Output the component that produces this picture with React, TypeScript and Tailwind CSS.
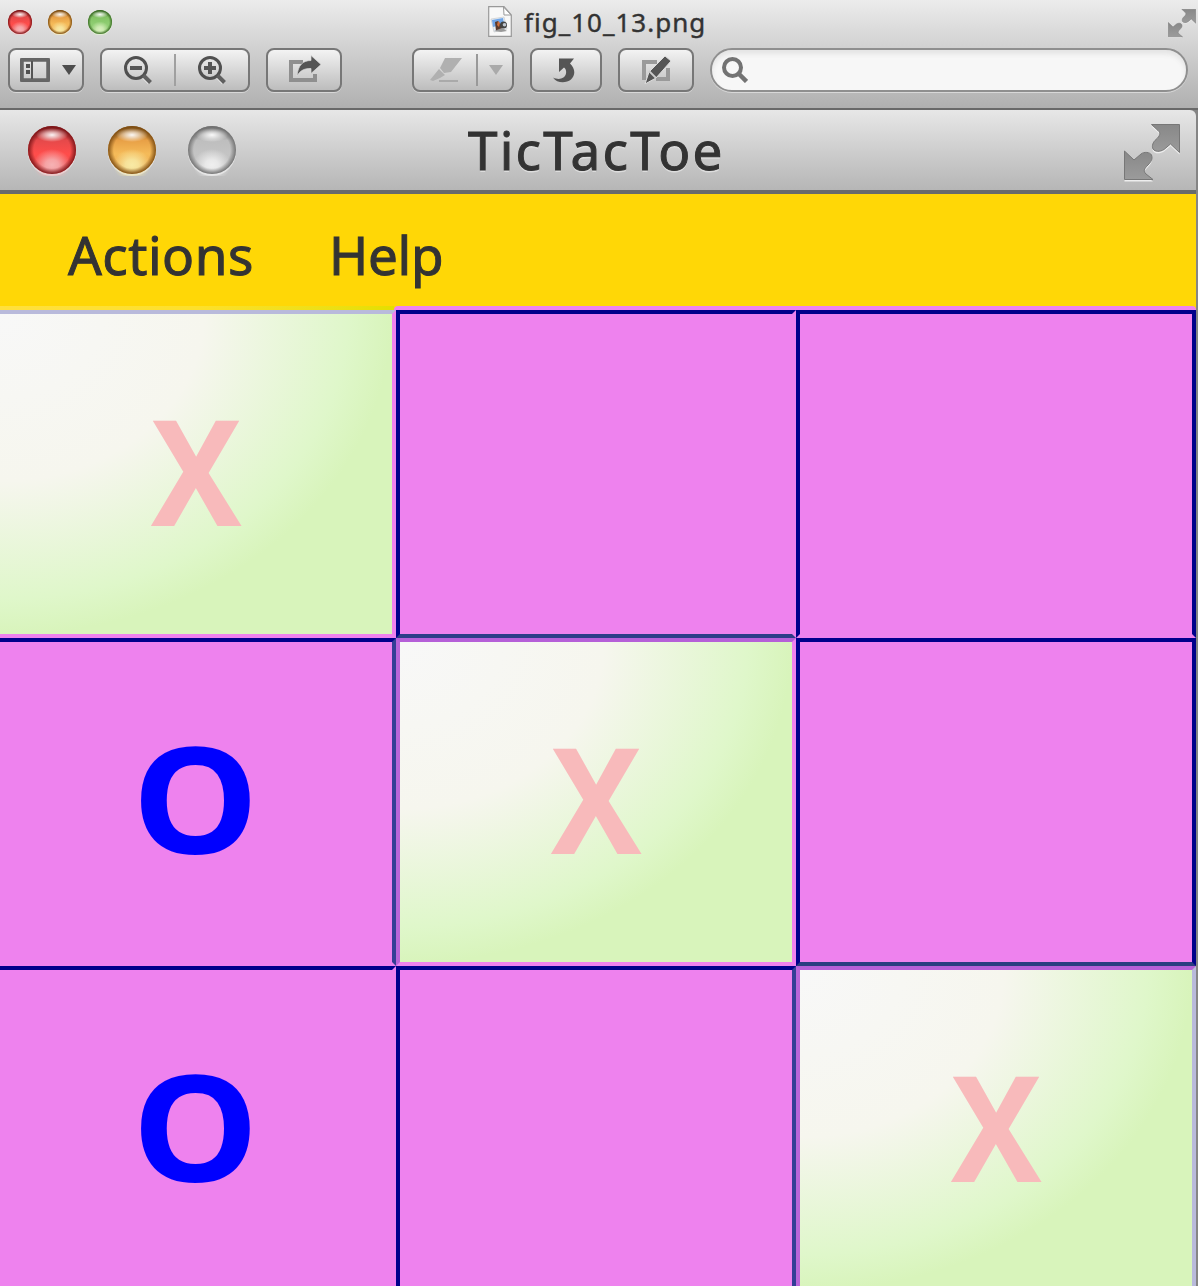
import type { ReactNode } from "react";

const BUTTON =
  "flex h-[44px] shrink-0 items-center rounded-[8px] border-2 border-[#777] bg-gradient-to-b from-[#f3f3f3] to-[#bdbdbd] shadow-[0_1px_0_#d8d8d8]";

function Light({ size, tone }: { size: "sm" | "lg"; tone: "red" | "amber" | "green" | "gray" }) {
  const tones = {
    red: ["#7d1518", "#e5494a", "#ff4d4b", "#f6b2b4"],
    amber: ["#7d4d12", "#e8a046", "#f5bb59", "#f8eaa5"],
    green: ["#3a6b25", "#83c364", "#8fce72", "#d8f0bd"],
    gray: ["#707070", "#bebebe", "#c4c4c4", "#efefef"],
  };
  const [edge, top, mid, glow] = tones[tone];
  return (
    <svg viewBox="0 0 48 50" className={size === "sm" ? "h-[25px] w-6" : "h-[50px] w-12"}>
      <defs>
        <linearGradient id={`b-${tone}-${size}`} x1="0" y1="0" x2="0" y2="1">
          <stop offset="0" stopColor={edge} />
          <stop offset=".3" stopColor={top} />
          <stop offset=".58" stopColor={mid} />
          <stop offset="1" stopColor={top} />
        </linearGradient>
        <radialGradient id={`r-${tone}-${size}`}>
          <stop offset=".76" stopColor={edge} stopOpacity="0" />
          <stop offset="1" stopColor={edge} stopOpacity=".95" />
        </radialGradient>
        <radialGradient id={`g-${tone}-${size}`}>
          <stop offset="0" stopColor={glow} />
          <stop offset=".35" stopColor={glow} stopOpacity=".85" />
          <stop offset="1" stopColor={glow} stopOpacity="0" />
        </radialGradient>
        <radialGradient id={`h-${tone}-${size}`}>
          <stop offset="0" stopColor="#fff" stopOpacity=".95" />
          <stop offset=".4" stopColor="#fff" stopOpacity=".6" />
          <stop offset="1" stopColor="#fff" stopOpacity="0" />
        </radialGradient>
      </defs>
      <circle cx="24" cy="26" r="24" fill="#fff" opacity=".5" />
      <circle cx="24" cy="24" r="24" fill={`url(#b-${tone}-${size})`} />
      <ellipse cx="24" cy="39" rx="19" ry="16" fill={`url(#g-${tone}-${size})`} />
      <circle cx="24" cy="24" r="24" fill={`url(#r-${tone}-${size})`} />
      <ellipse cx="24" cy="9" rx="16" ry="7" fill={`url(#h-${tone}-${size})`} />
    </svg>
  );
}

function Magnifier({ sign }: { sign: "minus" | "plus" }) {
  return (
    <svg viewBox="0 0 28 28" className="h-7 w-7" fill="none">
      <path d="M19.5 21.5l5.5 5.5" stroke="#eee" strokeWidth="3" />
      <circle cx="12" cy="12" r="10.5" stroke="#505050" strokeWidth="3" />
      <path d="M19.5 19.5l7 7" stroke="#606060" strokeWidth="4" />
      <path d="M6 12h12" stroke="#555" strokeWidth="4" />
      {sign === "plus" && <path d="M12 6v12" stroke="#555" strokeWidth="4" />}
    </svg>
  );
}

function Expand({ className }: { className: string }) {
  return (
    <svg viewBox="0 0 56 58" className={className}>
      <defs>
        <linearGradient id="arrow" x1="0" y1="0" x2="0" y2="1">
          <stop offset="0" stopColor="#888" />
          <stop offset="1" stopColor="#9b9b9b" />
        </linearGradient>
      </defs>
      {["translate(0 2)", ""].map((t, i) => (
        <g key={i} transform={t} fill={i ? "url(#arrow)" : "#eee"} stroke={i ? "#777" : "none"} strokeWidth="1">
          <path d="M27.500 .5H55.500V28.500L46.500 20L40 25.500C36 28 31 28 29 25C27.500 22 29 18 32 15.500C36 12 37 9 34 6.500z" />
          <path d="M.5 27L10 36L17 30C20 27.500 26 28 27.500 31C29 35 27 38 24 41C20 45 19 47 22 50L29 55.500H.5z" />
        </g>
      ))}
    </svg>
  );
}

function FileIcon() {
  return (
    <svg viewBox="0 0 24 31" className="h-[31px] w-6">
      <path d="M.7 .7H16L23.300 9v21.300H.7z" fill="#f8f8f8" stroke="#999" strokeWidth="1.200" />
      <path d="M15.500 1l.5 8h7z" fill="#fff" stroke="#999" />
      <path d="M3 13l13-2 3 12-13 3z" fill="#e5eef7" stroke="#bbb" strokeWidth=".5" />
      <path d="M4 14l11-2 1 6-11 3z" fill="#6fa5e8" />
      <path d="M7 16l3-1 2 3 3 1-1 5-6 1z" fill="#59392c" />
      <path d="M10 15l2 2-1 4-2-2z" fill="#cf6f3c" />
      <circle cx="15.500" cy="19" r="3.500" fill="#444" />
      <circle cx="16.500" cy="18.700" r="1.800" fill="#c0c8d2" />
      <path d="M6 25l8-3 5 3-6 1z" fill="#999" />
    </svg>
  );
}

function Divider() {
  return <span className="h-8 w-[2px] bg-[#a0a0a0]" />;
}

function Toolbar() {
  return (
    <div className="flex h-[44px] items-center pl-2">
      <div className={`${BUTTON} w-[76px] pl-[10px]`}>
        <svg viewBox="0 0 30 24" className="h-6 w-[30px]">
          <rect x="1" y="1" width="28" height="22" rx="1" fill="none" stroke="#666" strokeWidth="2" />
          <rect x="2" y="2" width="26" height="20" fill="none" stroke="#666" strokeWidth="3.500" />
          <path d="M12 3v18" stroke="#555" strokeWidth="2" />
          <path d="M6 6h4v4H6zM6 12h4v4H6z" fill="#505050" />
        </svg>
        <svg viewBox="0 0 14 10" className="ml-3 h-[10px] w-[14px]">
          <path d="M0 0h14L7 10z" fill="#4d4d4d" />
        </svg>
      </div>
      <div className={`${BUTTON} ml-4 w-[150px]`}>
        <span className="flex w-[72px] justify-center pr-[1px]"><Magnifier sign="minus" /></span>
        <Divider />
        <span className="flex w-[72px] justify-center pr-[1px]"><Magnifier sign="plus" /></span>
      </div>
      <div className={`${BUTTON} ml-4 w-[76px] justify-center pl-[2px]`}>
        <svg viewBox="0 0 32 28" className="mb-[2px] h-7 w-8">
          <path d="M14 7H2v18h24v-6" fill="none" stroke="#8f8f8f" strokeWidth="4" />
          <path d="M8 21C9 10 14 5.500 22 5.500V.5l10 9-10 9v-5c-6 0-10 1-14 7.500z" fill="#555" stroke="#ddd" strokeWidth=".7" />
        </svg>
      </div>
      <div className={`${BUTTON} ml-[70px] w-[102px]`}>
        <svg viewBox="0 0 32 26" className="ml-4 h-[26px] w-8">
          <path d="M15 1h17L21 15l-7 1-4-5zM9 12l6 6-5 3-7 3-3-1z" fill="#b0b0b0" />
          <path d="M9 24h19" stroke="#aaa" strokeWidth="2" />
        </svg>
        <span className="ml-[14px] h-8 w-[2px] bg-[#999]" />
        <svg viewBox="0 0 14 10" className="ml-[11px] h-[10px] w-[14px]">
          <path d="M0 0h14L7 10z" fill="#aaa" />
        </svg>
      </div>
      <div className={`${BUTTON} ml-4 w-[72px] justify-center pr-1`}>
        <svg viewBox="0 0 22 25" className="h-[25px] w-[22px]">
          <path d="M6 .5H21L17 5.500c5 5 6 11 1 16-5 4-14 4-18-2 6 3 12 1 13-4 .5-3-.5-5-2-6L6 14z" fill="#555" />
        </svg>
      </div>
      <div className={`${BUTTON} ml-4 w-[76px] justify-center pr-px`}>
        <svg viewBox="0 0 32 28" className="h-7 w-8">
          <path d="M17 6H4v18M16 23h12V12" fill="none" stroke="#9a9a9a" strokeWidth="4" />
          <path d="M25 0l6 5-15 17-11 6 4-12z" fill="#555" stroke="#ddd" strokeWidth="1" />
          <path d="M9 15l7 7" stroke="#ccc" strokeWidth="1.800" />
        </svg>
      </div>
      <div className="ml-4 flex h-[44px] w-[478px] items-center rounded-full border-2 border-[#8f8f8f] bg-[#f7f7f7] pl-[10px] shadow-[inset_0_4px_5px_#e4e4e4,0_1px_0_#d8d8d8]">
        <svg viewBox="0 0 26 26" className="h-[26px] w-[26px]" fill="none" stroke="#737373">
          <circle cx="10.500" cy="10.500" r="8.500" strokeWidth="4" />
          <path d="M16.500 16.500l8 8" strokeWidth="4.500" />
        </svg>
      </div>
    </div>
  );
}

type Mark = "X" | "O" | "";

const squares: { mark: Mark; edges: string }[] = [
  { mark: "X", edges: "border-l-0 border-t-[#b9badb] border-r-[#ee82ee] border-b-[#ee82ee]" },
  { mark: "", edges: "border-t-[#00008b] border-l-[#00008b] border-r-[#ee82ee] border-b-[#2c3d88]" },
  { mark: "", edges: "border-t-[#00008b] border-l-[#00008b] border-r-[#00008b] border-b-[#ee82ee]" },
  { mark: "O", edges: "border-l-0 border-t-[#00008b] border-r-[#343e96] border-b-[#ee82ee]" },
  { mark: "X", edges: "border-t-[#b55fd8] border-l-[#b964d9] border-r-[#ee82ee] border-b-[#ee82ee]" },
  { mark: "", edges: "border-t-[#00008b] border-l-[#00008b] border-r-[#00008b] border-b-[#293d80]" },
  { mark: "O", edges: "border-l-0 border-t-[#00008b] border-r-[#ee82ee] border-b-0" },
  { mark: "", edges: "border-t-[#00008b] border-l-[#00008b] border-r-[#343e96] border-b-0" },
  { mark: "X", edges: "border-t-[#b55fd8] border-l-[#b964d9] border-r-[#b9badb] border-b-0" },
];

function Square({ mark, edges }: { mark: Mark; edges: string }) {
  let content: ReactNode = null;
  if (mark === "X")
    content = <span className="mt-[55px] ml-px block scale-x-[0.930] text-[147px] leading-[200px] text-[#f8babb]">X</span>;
  if (mark === "O")
    content = <span className="mt-[55px] block scale-x-[1.080] text-[148px] leading-[200px] text-[#0000ff]">O</span>;
  return (
    <div
      className={`flex items-start justify-center overflow-hidden border-4 font-bold ${edges} ${
        mark === "X"
          ? "bg-[radial-gradient(400px_328px_at_0_0,#f8f8f8_0%,#f6f6ee_51%,#dff7ca_87%,#d8f4bb_98%)] bg-origin-padding"
          : "bg-[#ee82ee]"
      }`}
    >
      {content}
    </div>
  );
}

export default function App() {
  return (
    <div className="flex h-[1286px] w-[1198px] flex-col overflow-hidden bg-[#858585] font-['Noto_Sans','Open_Sans',sans-serif] text-[#333]">
      <header className="h-[110px] shrink-0 border-b-2 border-[#696969] bg-gradient-to-b from-[#ececec] to-[#b0b0b0]">
        <div className="flex h-12 items-start">
          <div className="flex gap-4 pt-[10px] pl-2">
            <Light size="sm" tone="red" />
            <Light size="sm" tone="amber" />
            <Light size="sm" tone="green" />
          </div>
          <div className="ml-[376px] flex w-[220px] items-start pt-[6px]">
            <FileIcon />
            <span className="ml-3 text-[26px] leading-8 tracking-[1px] whitespace-nowrap [-webkit-text-stroke:0.400px_#333]">
              fig_10_13.png
            </span>
          </div>
          <Expand className="mt-[9px] mr-[2px] ml-auto h-[29px] w-7" />
        </div>
        <Toolbar />
      </header>
      <main className="flex min-h-0 w-[1196px] grow flex-col">
        <div className="flex h-[84px] shrink-0 items-start rounded-tr-[6px] border-b-4 border-[#686b6b] bg-gradient-to-b from-[#e7e7e7] to-[#b6b6b6]">
          <div className="flex w-[468px] gap-8 pt-4 pl-7">
            <Light size="lg" tone="red" />
            <Light size="lg" tone="amber" />
            <Light size="lg" tone="gray" />
          </div>
          <h1 className="text-[53px] leading-[80px] tracking-[2.200px] [-webkit-text-stroke:1px_#333] [text-shadow:0_2px_0_#dddddd]">
            TicTacToe
          </h1>
          <Expand className="mt-[14px] mr-4 ml-auto h-[58px] w-14" />
        </div>
        <nav className="flex h-[112px] shrink-0 bg-[#ffd706] pl-[68px] text-[53px] leading-[122px] [-webkit-text-stroke:1px_#333]">
          <span className="w-[261px] tracking-[0.500px]">Actions</span>
          <span className="tracking-[-0.300px]">Help</span>
        </nav>
        <div className="grid h-1 shrink-0 grid-cols-[394px_1fr] bg-[#ffd706]">
          <span className="bg-gradient-to-r from-[#ffe03d] via-[#fde02b] to-[#e4df00]" />
          <span className="rounded-t-[4px] bg-[#ee82ee]" />
        </div>
        <div className="grid grid-cols-[396px_400px_400px] grid-rows-[328px_328px_320px]">
          {squares.map((s, i) => (
            <Square key={i} {...s} />
          ))}
        </div>
      </main>
    </div>
  );
}
